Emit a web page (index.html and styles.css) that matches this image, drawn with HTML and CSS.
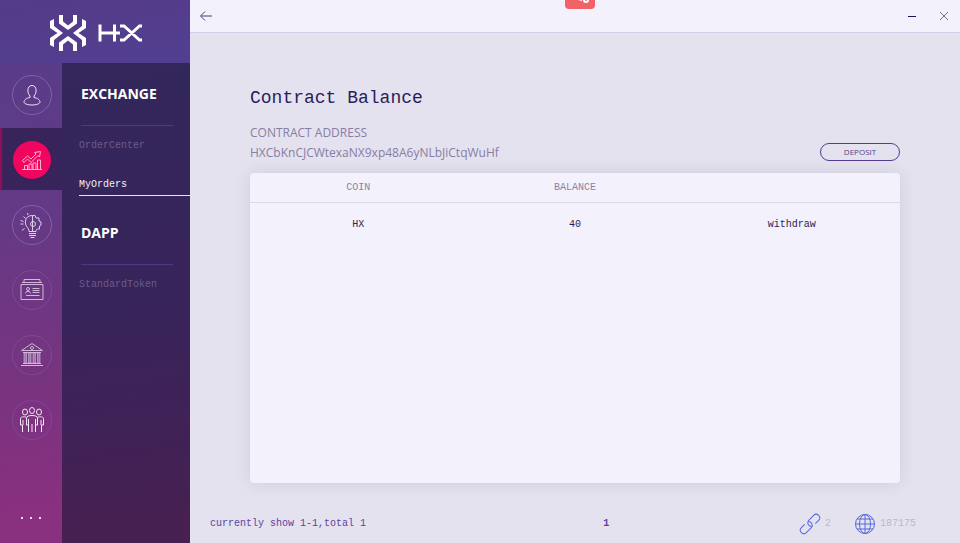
FILE: index.html
```html
<!DOCTYPE html>
<html lang="en">
<head>
<meta charset="utf-8">
<meta name="viewport" content="width=device-width, initial-scale=1">
<title>HX Wallet</title>
<link rel="stylesheet" href="styles.css">
</head>
<body>
<aside class="sidebar">
  <div class="brand">
    <svg class="brand-mark" viewBox="0 0 36 36" aria-hidden="true">
      <path d="M9 0h4v6.500l5 4 5-4V0h4v8.500l-9 6.500-9-6.500zM9 36h4v-6.500l5-4 5 4V36h4v-8.500L18 21l-9 6.500zM0 6l4-2v7l9 7-9 7v7l-4-2v-7l7.500-5L0 13zM36 6l-4-2v7l-9 7 9 7v7l4-2v-7l-7.500-5 7.500-5z"/>
    </svg>
    <svg class="brand-name" viewBox="0 0 44 18" role="img" aria-label="HX">
      <path d="M2 .500v17M16.500.500v17M2 9h20M44 2h-2.500L26 16h-4M22 2h4l15.500 14H44"/>
    </svg>
  </div>
  <div class="menus">
    <nav class="rail" aria-label="Main">
      <a class="rail-item bright" href="#" aria-label="Account"><span class="disc">
        <svg viewBox="0 0 26 26"><path d="M13 3.500c-5.200 0-5 8-2 10.500v1.500c-3.500.500-6 2.500-6 4.500 0 1.500 3 3 8 3s8-1.500 8-3c0-2-2.500-4-6-4.500V14c3-2.500 3.200-10.500-2-10.500z"/></svg></span></a>
      <a class="rail-item active" href="#" aria-label="Exchange"><span class="disc">
        <svg viewBox="0 0 26 26"><path d="M3 22.500h20M5.500 22v-3.500h3V22M10 22v-5h3v5M14 22v-6h3v6M18.500 22v-9h3v9M3.500 13.500l5-4.500 3.500 3 5-5-1.500-1.500 6-1-1 5.500-1.500-1.500-7 7-3.500-3.500-3.500 3.500z"/></svg></span></a>
      <a class="rail-item" href="#" aria-label="Ideas"><span class="disc">
        <svg viewBox="0 0 26 26"><path d="M13.500 3.500C5 3.500 5.500 12 8 15c1 1 2 2.500 2 4.500h7c0-1.500.500-2.500 1.500-2.500h2v-3l1.500-1v-3l-2-1V6h-3l-1-2.500zM13.500 3.500v16M10 21.500h7M10 23.500h7M11.500 25.500h4M4.500 4.500l2 2M1.500 12h3M3 18.500l2.500-2M8.500 1l.500 2M1.500 8.500l3 1"/><circle cx="14" cy="12" r="2.500"/></svg></span></a>
      <a class="rail-item faint" href="#" aria-label="Contacts"><span class="disc">
        <svg viewBox="0 0 26 26"><path d="M2 7.500h22v15H2zM3 5.500h20M5 2.500h16v3M5 2.500v3M13.500 11.500h7M13.500 13.500h7M13.500 15.500h7M7 18.500h13.500M6.500 16.500l1-2h3l1 2"/><circle cx="9" cy="12" r="1.500"/></svg></span></a>
      <a class="rail-item faint" href="#" aria-label="Bank"><span class="disc">
        <svg viewBox="0 0 26 26"><path d="M13 1.500 2.500 8.500h21zM4 10.500h18M4 21.500h18M2 23.500h22"/><circle cx="13" cy="6" r="1.500"/><path class="solid" d="M5 11h2.500v10H5zM9.500 11H12v10H9.500zM14 11h2.500v10H14zM18.500 11H21v10h-2.500z"/></svg></span></a>
      <a class="rail-item faint bright" href="#" aria-label="Community"><span class="disc">
        <svg viewBox="0 0 26 26"><ellipse cx="13" cy="3.500" rx="2.500" ry="3"/><ellipse cx="6" cy="5" rx="2.500" ry="3"/><ellipse cx="20" cy="5" rx="2.500" ry="3"/><path d="M9.500 25V12M9.500 18H7.500v-7c0-2 3-2.500 5.500-2.500s5.500.500 5.500 2.500v7h-2M16.500 25V12M13 17v8M7 10c-4-.500-5.500 0-5.500 2v6H3.500v7M4 13v5M19 10c4-.500 5.500 0 5.500 2v6h-2v7M22 13v5"/></svg></span></a>
      <button class="more" type="button" aria-label="More"><i></i><i></i><i></i></button>
    </nav>
    <nav class="submenu" aria-label="Section">
      <h2>EXCHANGE</h2>
      <ul>
        <li><a href="#">OrderCenter</a></li>
        <li><a class="current" href="#">MyOrders</a></li>
      </ul>
      <h2>DAPP</h2>
      <ul>
        <li><a href="#">StandardToken</a></li>
      </ul>
    </nav>
  </div>
</aside>
<main class="main">
  <header class="titlebar">
    <button class="icon-button" type="button" aria-label="Back"><svg viewBox="0 0 12 10"><path d="M12 5H1M5 .500.500 5 5 9.500"/></svg></button>
    <div class="share-tab"><svg viewBox="0 0 30 9" aria-hidden="true"><path d="M13-1l4 1"/><circle cx="21" cy="0" r="2"/></svg></div>
    <div class="window-buttons">
      <button class="icon-button minimize" type="button" aria-label="Minimize"><svg viewBox="0 0 8 10"><path d="M0 5.500h8"/></svg></button>
      <button class="icon-button close" type="button" aria-label="Close"><svg viewBox="0 0 8 8"><path d="M0 0l8 8M8 0 0 8"/></svg></button>
    </div>
  </header>
  <section class="content">
    <h1>Contract Balance</h1>
    <div class="address-row">
      <div class="address">
        <div>CONTRACT ADDRESS</div>
        <div>HXCbKnCJCWtexaNX9xp48A6yNLbJiCtqWuHf</div>
      </div>
      <button class="deposit" type="button">DEPOSIT</button>
    </div>
    <div class="card">
      <table>
        <thead><tr><th>COIN</th><th>BALANCE</th><th></th></tr></thead>
        <tbody><tr><td>HX</td><td>40</td><td><a href="#">withdraw</a></td></tr></tbody>
      </table>
    </div>
  </section>
  <footer class="footer">
    <span>currently show 1-1,total 1</span>
    <a class="page" href="#">1</a>
    <div class="status">
      <span class="stat"><svg viewBox="0 0 20 20" aria-hidden="true"><path transform="rotate(-45 10 10)" d="M14 13.500h4.700a3.500 3.500 0 0 0 0-7h-7A3.500 3.500 0 0 0 9.500 12.700M6 6.500H1.300a3.500 3.500 0 0 0 0 7h7A3.500 3.500 0 0 0 10.500 7.300"/></svg>2</span>
      <span class="stat"><svg viewBox="0 0 20 20" aria-hidden="true"><circle cx="10" cy="10" r="9.500"/><ellipse cx="10" cy="10" rx="5.500" ry="9.500"/><path d="M10 .500v19M.500 10h19M2 5h16M2 15h16"/></svg>187175</span>
    </div>
  </footer>
</main>
</body>
</html>
```
FILE: styles.css
```css
* { box-sizing: border-box; }

body {
  margin: 0;
  min-height: 100vh;
  display: flex;
  background: #e4e2ee;
  color: #2b1d5c;
  font: 10px/20px "Liberation Mono", monospace;
}

a { color: inherit; text-decoration: none; }
button { padding: 0; border: 0; background: none; color: inherit; cursor: pointer; }
svg { display: block; fill: none; stroke: currentColor; overflow: visible; }

.sidebar {
  flex: 0 0 190px;
  display: flex;
  flex-direction: column;
  background: linear-gradient(172deg, #513f91 0%, #5a3c88 14%, #643985 38%, #78347f 68%, #89307f 90%, #8a307f 100%);
}

.brand {
  height: 63px;
  padding: 2px 0 0 2px;
  display: flex;
  align-items: center;
  justify-content: center;
  gap: 12px;
  color: #fff;
  background: linear-gradient(170deg, #553b88, #523f91);
}
.brand-mark { width: 36px; height: 36px; fill: currentColor; stroke: none; }
.brand-name { width: 44px; height: 18px; stroke-width: 3; }

.menus { flex: 1; display: flex; }

.rail {
  flex: 0 0 62px;
  display: flex;
  flex-direction: column;
  gap: 3px;
}
.rail-item {
  height: 62px;
  padding: 1px 0 0 1px;
  display: flex;
  align-items: center;
  justify-content: center;
  color: #dccfe8;
}
.disc {
  width: 40px;
  height: 40px;
  display: grid;
  place-items: center;
  border: 1px solid #8460a8;
  border-radius: 50%;
}
.disc svg { width: 26px; height: 26px; }
.solid { fill: currentColor; fill-opacity: .5; stroke-opacity: .6; }
.faint { color: #d0b6d8; }
.faint .disc { border-color: #80469a; }
.rail-item.bright { color: #f3e8f6; }
.active {
  color: #ffb3cd;
  background: linear-gradient(90deg, #a00e5c, #38235a 3px);
}
.active .disc { width: 38px; height: 38px; border: 0; background: #f0055f; }

.more {
  height: 20px;
  margin: auto 0 15px;
  display: flex;
  align-items: center;
  justify-content: center;
  gap: 7px;
}
.more i { width: 2px; height: 2px; background: #f0e4f2; }

.submenu {
  flex: 1;
  padding: 15px 0 0 17px;
  color: #6d5a8f;
  background: linear-gradient(172deg, #33275b, #37245a 50%, #402257 75%, #47204f);
}
.submenu h2 {
  margin: 0 17px 0 2px;
  padding-bottom: 15px;
  border-bottom: 1px solid #50378a;
  color: #fff;
  font: bold 14px/32px "Open Sans", sans-serif;
}
.submenu ul { margin: 0 0 21px; padding: 9px 0 0; list-style: none; }
.submenu li + li { margin-top: 17px; }
.submenu a { display: block; height: 22px; line-height: 22px; }
.submenu .current { color: #f4effa; border-bottom: 1px solid #eadff5; }

.main { flex: 1; min-width: 0; display: flex; flex-direction: column; }

.titlebar {
  position: relative;
  height: 33px;
  padding: 0 12px 0 10px;
  display: flex;
  align-items: center;
  justify-content: space-between;
  background: #f3f1fb;
  border-bottom: 1px solid #d2cfe6;
}
.icon-button svg { width: 12px; height: 10px; color: #4b3f74; }
.window-buttons { display: flex; align-items: center; gap: 24px; }
.window-buttons svg { width: 8px; height: 8px; }
.window-buttons .minimize svg { height: 10px; color: #1f1150; }
.window-buttons .close svg { color: #756b95; }
.share-tab {
  position: absolute;
  top: 0;
  left: calc(50% - 10px);
  width: 30px;
  height: 9px;
  overflow: hidden;
  border-radius: 0 0 4px 4px;
  background: #f16369;
  color: #fff;
}
.share-tab svg { stroke-width: 2; }

.content {
  flex: 1;
  padding: 50px 60px 0;
  display: flex;
  flex-direction: column;
}
h1 { margin: 0; font-size: 18px; font-weight: normal; line-height: 30px; }
.address-row {
  margin-top: 10px;
  padding-bottom: 10px;
  display: flex;
  align-items: flex-end;
  justify-content: space-between;
}
.address { color: #877da5; font: 12px/20px "Open Sans", sans-serif; }
.deposit {
  width: 80px;
  height: 18px;
  margin-bottom: 2px;
  border: 1px solid #533c90;
  border-radius: 9px;
  color: #533c90;
  font: 8px/16px "Open Sans", sans-serif;
}
.card {
  flex: 1;
  border-radius: 4px;
  background: #f3f1fb;
  box-shadow: 0 0 16px rgba(60, 50, 100, .12);
}
table { width: 100%; border-collapse: collapse; table-layout: fixed; }
th, td { padding: 2px 0 0; text-align: center; }
th { height: 29px; border-bottom: 1px solid #dbd8e9; color: #8b82a8; font-weight: normal; }
td { height: 43px; }

.footer {
  height: 60px;
  padding: 30px 44px 0 20px;
  display: grid;
  grid-template-columns: 2fr 1fr auto;
  align-items: center;
  align-content: start;
  line-height: 22px;
  color: #5e41a5;
}
.page { font-weight: bold; }
.status { display: flex; gap: 24px; color: #bab8cf; }
.stat { display: flex; align-items: center; gap: 5px; }
.stat svg { width: 20px; height: 20px; color: #5669dc; }
```
